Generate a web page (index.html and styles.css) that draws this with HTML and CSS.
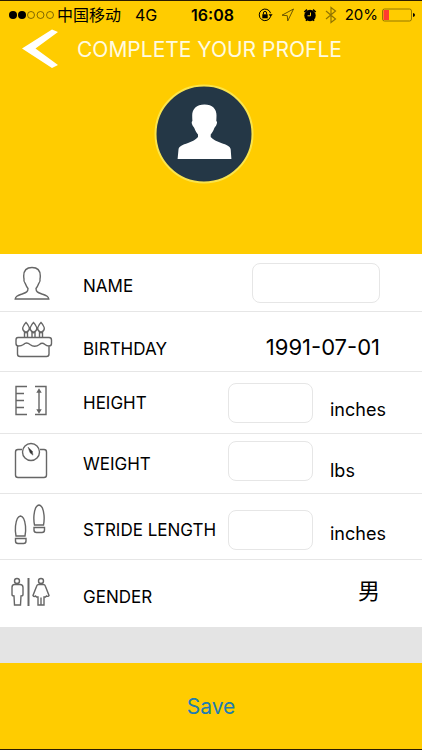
FILE: index.html
```html
<!DOCTYPE html>
<html lang="en">
<head>
<meta charset="utf-8">
<meta name="viewport" content="width=device-width, initial-scale=1">
<title>Complete your profile</title>
<link rel="stylesheet" href="styles.css">
</head>
<body>
<form class="screen">
  <header class="header">
    <div class="status">
      <div class="status-left">
        <svg class="signal" width="46" height="12" viewBox="0 0 46 12">
          <circle cx="4" cy="6" r="4"/><circle cx="13" cy="6" r="4"/>
          <g fill="none" stroke="#4d3d00" stroke-width=".7"><circle cx="22" cy="6" r="3.5"/><circle cx="31.500" cy="6" r="3.500"/><circle cx="41" cy="6" r="3.500"/></g>
        </svg>
        <span class="carrier" lang="zh">中国移动</span>
        <span>4G</span>
      </div>
      <span class="time">16:08</span>
      <div class="status-right">
        <svg width="15" height="14" viewBox="0 0 15 14">
          <path d="M12.600 8.500A5.800 5.800 0 1 1 12.600 5.200" fill="none" stroke="#000"/>
          <path d="M10.600 6.200h4l-2 2.700z"/>
          <path d="M4.300 6.300h5.400v4H4.300z"/>
          <path d="M5.400 6.500V5a1.600 1.600 0 0 1 3.200 0v1.500" fill="none" stroke="#000"/>
        </svg>
        <svg width="14" height="14" viewBox="0 0 14 14"><path d="M12.500 1L1 7.200l5.300.5.400 5.300z" fill="none" stroke="#6b5600"/></svg>
        <svg width="14" height="14" viewBox="0 0 14 14">
          <circle cx="7" cy="7.500" r="5.700"/>
          <path d="M1.300 4L4 1.600M12.700 4L10 1.600M3 12.800l1.500-2M11 12.800l-1.500-2" stroke="#000" stroke-width="1.600"/>
          <path d="M7.500 4.500v3.300H4.500" fill="none" stroke="#fc0"/>
        </svg>
        <svg width="12" height="18" viewBox="0 0 12 18"><path d="M1 5l9.500 8L6 16.500v-15L10.500 5 1 13" fill="none" stroke="#917400" stroke-width="1.200"/></svg>
        <span class="percent">20%</span>
        <svg width="34" height="14" viewBox="0 0 34 14">
          <rect x=".5" y="1" width="29" height="12" rx="2" fill="none" stroke="#7a6200" stroke-width=".8"/>
          <path d="M1.500 2H7v10H1.500z" fill="#ff3b30"/>
          <path d="M31 5q2 .5 2 2t-2 2z"/>
        </svg>
      </div>
    </div>
    <div class="titlebar">
      <button class="back" type="button" aria-label="Back">
        <svg width="38" height="42" viewBox="0 0 38 42"><path d="M31 1.500L37 4 14.500 20.500 37 37l-6 3L1 20.500z" fill="#fff"/></svg>
      </button>
      <h1>COMPLETE YOUR PROFLE</h1>
    </div>
    <svg class="avatar" width="100" height="100" viewBox="0 0 100 100">
      <circle cx="50" cy="50" r="48.500" fill="#243746" stroke="#fbe44a" stroke-width="2"/>
      <path d="M50.500 20.500c8 0 12 4.500 12 11 0 2-.1 3.500-.2 5.500.8.500 1 1.500.4 3-.5 1.800-1.500 2.800-2.300 4-1 3-2.400 4.800-3.700 6.500v2.500c2 2.500 6.500 4.500 10.500 6 5.500 2 9 3 9.500 6.500l.7 9.500H23.600l.9-9.500c.5-3.500 4-4.500 9.500-6.500 4-1.500 8-3.500 10-6v-2.500c-1.300-1.700-2.700-3.500-3.700-6.500-.8-1.200-1.800-2.200-2.300-4-.5-1.500-.3-2.500.4-3-.1-2-.2-3.500-.2-5.500 0-6.500 4.300-11 12.300-11z" fill="#fff"/>
    </svg>
  </header>

  <main class="fields">
    <div class="row name">
      <svg class="icon" width="60" height="57" viewBox="0 0 60 57">
        <path d="M32 13.500c5.500 0 8.300 3.500 8.300 8.500 0 1-.1 2-.3 3 .7 2-.4 3.500-1.500 5-.7 2-1.500 3.200-2.500 4.500 0 3.500 2 4 6 5.500 5 1.700 6.500 2.500 6.800 5H15.200c.3-2.500 1.800-3.300 6.800-5 4-1.500 6-2 6-5.500-1-1.300-1.800-2.500-2.500-4.500-1.100-1.500-2.200-3-1.500-5-.2-1-.3-2-.3-3 0-5 2.800-8.500 8.300-8.500z"/>
      </svg>
      <label for="name">NAME</label>
      <input class="box wide" id="name" type="text">
    </div>
    <div class="row birthday">
      <svg class="icon" width="60" height="59" viewBox="0 0 60 59">
        <path d="M18 25.500h31q2.500 0 2.500 2.500v3.500q0 2.500-2.500 2.500-2.500 0-4-1.500-3-2.500-5.500 0-5 3.500-9.500 0-3.500-3-6.500 0-2 1.500-5 1.500-2.500 0-2.500-2.500V28q0-2.500 2-2.500zM17.500 34v8q0 2.500 2.500 2.500h26.500q2.500 0 2.500-2.500v-8"/>
        <path d="M24.500 25.500v-5h3v5M32 25.500v-5h3v5M39.500 25.500v-5h3v5"/>
        <path d="M26 20.500q-5-2.500-2.500-6.500 1-2 2.500-3.500 1.500 1.500 2.500 3.500 2.500 4-2.500 6.500zM33.500 20.500q-5-2.500-2.500-6.500 1-2 2.500-3.500 1.500 1.500 2.500 3.500 2.500 4-2.500 6.500zM41 20.500q-5-2.500-2.500-6.500 1-2 2.500-3.500 1.500 1.500 2.500 3.500 2.500 4-2.500 6.500z"/>
      </svg>
      <label for="birthday">BIRTHDAY</label>
      <input class="value" id="birthday" type="text" value="1991-07-01">
    </div>
    <div class="row height">
      <svg class="icon" width="60" height="61" viewBox="0 0 60 61">
        <path d="M27 14.500H16v28h11M16 21.500h8M16 28.500h8M16 35.500h8M35 14.500h11v28H35M39 19v20"/>
        <path d="M37.500 20l1.500-2.500 1.500 2.500zM37.500 38l1.500 2.500 1.500-2.500z" fill="#555"/>
      </svg>
      <label for="height">HEIGHT</label>
      <input class="box" id="height" type="text">
      <span class="unit">inches</span>
    </div>
    <div class="row weight">
      <svg class="icon" width="60" height="59" viewBox="0 0 60 59">
        <path d="M22 15.500h-4q-2.500 0-2.500 2.500v23q0 2.500 2.500 2.500h26q2.500 0 2.500-2.500V18q0-2.500-2.500-2.500h-4"/>
        <circle cx="31" cy="18" r="8.500"/>
        <path d="M28 13l4.300 4.200.7 4-3-2.500z" fill="#333" stroke-width=".5"/>
      </svg>
      <label for="weight">WEIGHT</label>
      <input class="box" id="weight" type="text">
      <span class="unit">lbs</span>
    </div>
    <div class="row stride">
      <svg class="icon" width="60" height="65" viewBox="0 0 60 65">
        <path d="M16 42q-1-5-.5-10 1-9.500 5-10 4 .5 5 10 .5 5-.5 10zM15.500 44.500h10.500v2.500q0 2.500-2.500 2.500H18q-2.500 0-2.500-2.500z"/>
        <path d="M34.500 31q-1-5-.5-10 1-9.500 5-10 4 .5 5 10 .5 5-.5 10zM34 33.500h10.500V36q0 2.500-2.500 2.500h-5.500Q34 38.500 34 36z"/>
      </svg>
      <label for="stride">STRIDE LENGTH</label>
      <input class="box" id="stride" type="text">
      <span class="unit">inches</span>
    </div>
    <div class="row gender">
      <svg class="icon" width="60" height="67" viewBox="0 0 60 67">
        <path d="M28.500 18v28" stroke-width="2"/>
        <circle cx="17" cy="21" r="2.500"/><circle cx="41" cy="21" r="2.500"/>
        <path d="M14.500 24.500h5.500q3 0 3 3v7q0 1.500-2 1.500l-.5 9h-6l-.500-9q-2 0-2-1.500v-7q0-3 2.500-3z"/>
        <path d="M38.500 24.500h5q1.500 0 2 2l3.500 9q-1 1.500-2.500.500l-1 1h-1.500v8h-6v-8h-1.500l-1-1q-1.500 1-2.500-.500l3.500-9q.5-2 2-2z"/>
        <path d="M41 37.500v7.500"/>
      </svg>
      <label for="gender">GENDER</label>
      <select class="value" id="gender" lang="zh"><option>男</option></select>
    </div>
  </main>
  <div class="spacer"></div>
  <button class="save" type="submit">Save</button>
</form>
</body>
</html>
```
FILE: styles.css
```css
* {
  box-sizing: border-box;
}

body {
  margin: 0;
  background: #e4e4e4;
  color: #000;
  font-family: Inter, "Noto Sans CJK SC", sans-serif;
  font-size: 17px;
}

input,
select,
button {
  margin: 0;
  padding: 0;
  border: 0;
  background: none;
  color: inherit;
  font: inherit;
}

.screen {
  display: flex;
  flex-direction: column;
  min-height: 100vh;
  border-top: 1px solid #2b1c00;
  border-bottom: 1px solid #2b1c00;
}

.header {
  display: flex;
  flex-direction: column;
  height: 253px;
  background: #fc0;
}

.status {
  display: grid;
  grid-template-columns: 1fr auto 1fr;
  align-items: center;
  height: 28px;
  padding: 0 6px 0 9px;
  font-size: 16px;
  line-height: 24px;
}

.status-left,
.status-right {
  display: flex;
  align-items: center;
}

.signal {
  margin-right: 2px;
}

.carrier {
  margin-right: 14px;
}

.time {
  font-weight: 600;
}

.status-right {
  justify-content: flex-end;
  gap: 8px;
}

.percent {
  margin-right: -4px;
  font-size: 15px;
}

.titlebar {
  display: flex;
  align-items: center;
  height: 40px;
  padding-left: 21px;
}

.back {
  display: flex;
  margin-right: 18px;
}

h1 {
  margin: 0;
  color: #fffbe0;
  font-size: 21px;
  font-weight: 400;
  white-space: nowrap;
}

.avatar {
  align-self: center;
  margin: 15px 14px 0 0;
}

.row {
  display: flex;
  align-items: center;
  border-bottom: 1px solid #e6e6e6;
  background: #fff;
}

.icon {
  flex: none;
  margin-right: 23px;
  fill: none;
  stroke: #666;
  stroke-width: 1.4;
}

label {
  flex: 1;
  padding-top: 6px;
  white-space: nowrap;
}

.birthday label {
  padding-top: 14px;
}

.height label,
.weight label {
  padding-top: 0;
}

.box {
  width: 85px;
  height: 40px;
  padding: 0 8px;
  border: 1px solid #e6e6e6;
  border-radius: 8px;
}

.wide {
  width: 128px;
  margin-right: 42px;
}

.unit {
  width: 92px;
  margin-left: 17px;
  padding-top: 14px;
  font-size: 18px;
}

.stride .box {
  margin-top: 6px;
}

.weight .box {
  margin-bottom: 6px;
}

.value {
  width: 140px;
  margin-right: 42px;
  font-size: 22px;
  text-align: right;
}

.birthday .value {
  padding-top: 10px;
}

.gender {
  border-bottom: 0;
}

.gender .value {
  padding-bottom: 6px;
  appearance: none;
  text-align-last: right;
}

.spacer {
  height: 36px;
}

.save {
  flex: 1;
  min-height: 86px;
  background: #fc0;
  color: #207cb0;
  font-size: 21px;
}
```
